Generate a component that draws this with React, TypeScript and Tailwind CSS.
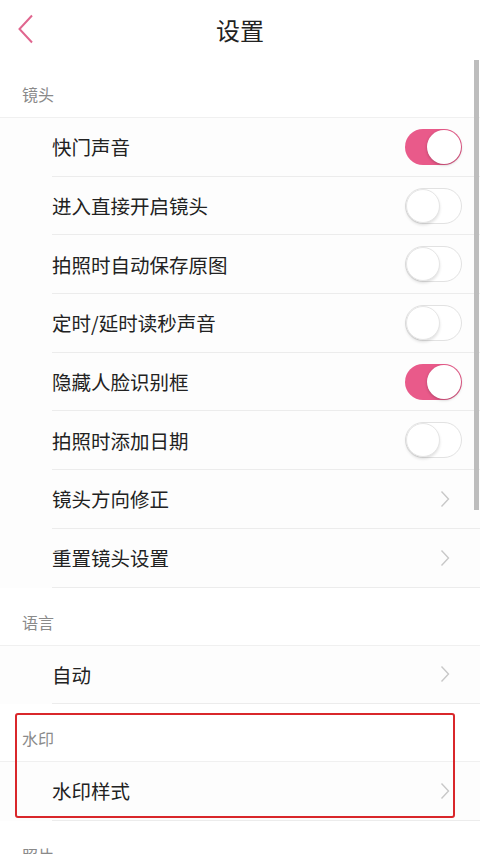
import React from "react";

type Row = { label: string; kind: "on" | "off" | "arrow" };

const lens: Row[] = [
  { label: "快门声音", kind: "on" },
  { label: "进入直接开启镜头", kind: "off" },
  { label: "拍照时自动保存原图", kind: "off" },
  { label: "定时/延时读秒声音", kind: "off" },
  { label: "隐藏人脸识别框", kind: "on" },
  { label: "拍照时添加日期", kind: "off" },
  { label: "镜头方向修正", kind: "arrow" },
  { label: "重置镜头设置", kind: "arrow" },
];

const font = { fontFamily: '"Noto Sans CJK SC", "Noto Sans", sans-serif' };

function Toggle({ on }: { on: boolean }) {
  return (
    <div
      className={
        on
          ? "relative w-[57px] h-[36px] rounded-full bg-[#e95a8a]"
          : "relative w-[57px] h-[36px] rounded-full bg-white border border-[#e2e2e2]"
      }
    >
      <div
        className={
          on
            ? "absolute right-[1px] top-[1px] w-[34px] h-[34px] rounded-full bg-white shadow-[0_1px_3px_rgba(0,0,0,0.25)]"
            : "absolute left-0 top-0 w-[34px] h-[34px] rounded-full bg-white border border-[#e6e6e6] shadow-[0_2px_3px_rgba(0,0,0,0.12)]"
        }
      />
    </div>
  );
}

function Chevron() {
  return (
    <svg width="10" height="18" viewBox="0 0 10 18" className="mr-[12px]">
      <path d="M1.5 1.5 L8.5 9 L1.5 16.5" fill="none" stroke="#c8c8c8" strokeWidth="1.4" />
    </svg>
  );
}

function Item({ row, last }: { row: Row; last?: boolean }) {
  return (
    <div className="pl-[52px] bg-[#fdfdfd]">
      <div
        className={
          "h-[58.7px] flex items-center justify-between pr-[18px] " +
          (last ? "" : "border-b border-[#ececec]")
        }
      >
        <span className="text-[19.5px] text-[#222]">{row.label}</span>
        {row.kind === "arrow" ? <Chevron /> : <Toggle on={row.kind === "on"} />}
      </div>
    </div>
  );
}

function Section({ title }: { title: string }) {
  return (
    <div className="h-[58px] flex items-end pb-[12px] pl-[22px] bg-white border-b border-[#f0f0f0]">
      <span className="text-[16px] leading-[22px] text-[#8a8a8a]">{title}</span>
    </div>
  );
}

export default function App() {
  return (
    <div className="relative w-[480px] h-[854px] overflow-hidden bg-white" style={font}>
      <header className="h-[60px] flex items-center justify-center relative">
        <svg width="18" height="30" viewBox="0 0 18 30" className="absolute left-[17px] top-[14px]">
          <path d="M15 1.5 L2.5 15 L15 28.5" fill="none" stroke="#e0668f" strokeWidth="2" />
        </svg>
        <h1 className="text-[24px] text-[#222] leading-none">设置</h1>
      </header>

      <Section title="镜头" />
      {lens.map((r) => (
        <Item key={r.label} row={r} />
      ))}

      <Section title="语言" />
      <Item row={{ label: "自动", kind: "arrow" }} />

      <div className="relative">
        <Section title="水印" />
        <Item row={{ label: "水印样式", kind: "arrow" }} />
        <div className="absolute left-[15px] top-[9px] w-[440px] h-[105px] border-2 border-[#d9272b] rounded-[3px]" />
      </div>

      <Section title="照片" />

      <div className="absolute right-[1px] top-[60px] w-[5px] h-[450px] bg-[#bdbdbd]" />
    </div>
  );
}
